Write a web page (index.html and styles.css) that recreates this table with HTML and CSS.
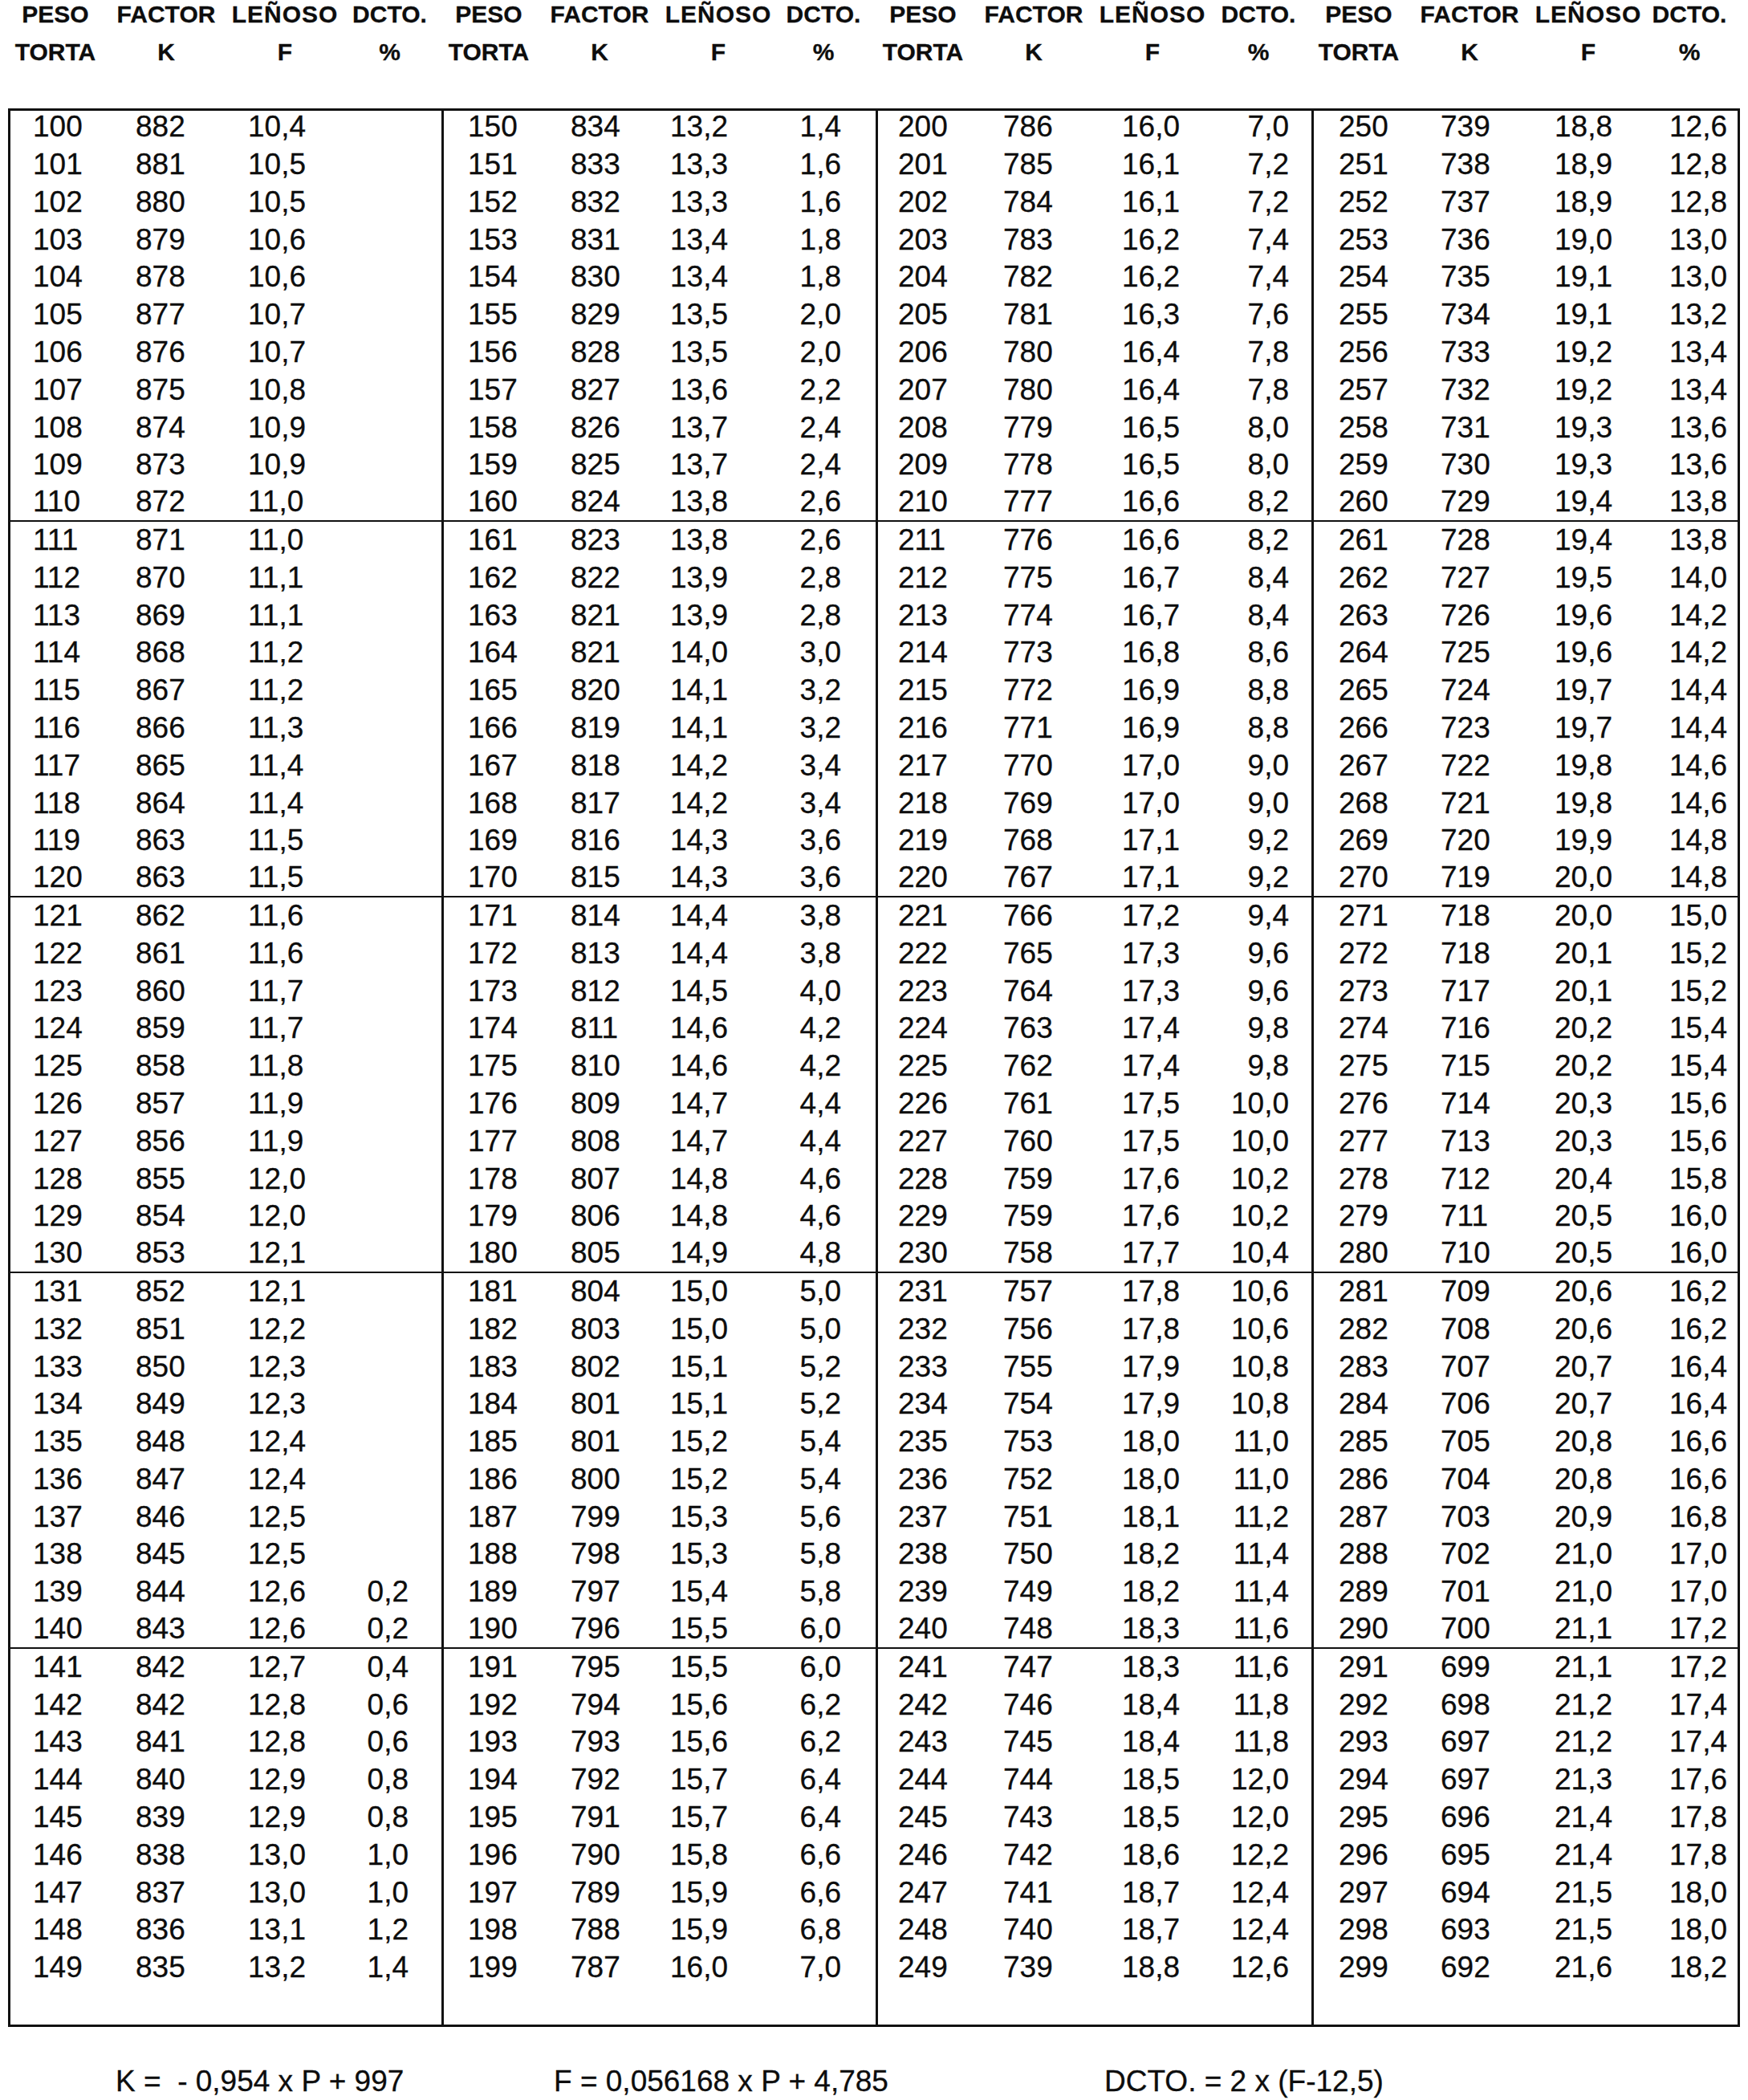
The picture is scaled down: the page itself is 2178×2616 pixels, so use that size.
FILE: index.html
```html
<!DOCTYPE html>
<html lang="es">
<head>
<meta charset="utf-8">
<title>Tabla peso torta</title>
<link rel="stylesheet" href="styles.css">
</head>
<body>
<div class="head">
  <div class="hg g1"><span>PESO</span><span>FACTOR</span><span>LEÑOSO</span><span>DCTO.</span><span>TORTA</span><span>K</span><span>F</span><span>%</span></div>
  <div class="hg g2"><span>PESO</span><span>FACTOR</span><span>LEÑOSO</span><span>DCTO.</span><span>TORTA</span><span>K</span><span>F</span><span>%</span></div>
  <div class="hg g3"><span>PESO</span><span>FACTOR</span><span>LEÑOSO</span><span>DCTO.</span><span>TORTA</span><span>K</span><span>F</span><span>%</span></div>
  <div class="hg g4"><span>PESO</span><span>FACTOR</span><span>LEÑOSO</span><span>DCTO.</span><span>TORTA</span><span>K</span><span>F</span><span>%</span></div>
</div>
<div class="box">
  <div class="grp g1">
    <div class="r"><span>100</span><span>882</span><span>10,4</span><span></span></div>
    <div class="r"><span>101</span><span>881</span><span>10,5</span><span></span></div>
    <div class="r"><span>102</span><span>880</span><span>10,5</span><span></span></div>
    <div class="r"><span>103</span><span>879</span><span>10,6</span><span></span></div>
    <div class="r"><span>104</span><span>878</span><span>10,6</span><span></span></div>
    <div class="r"><span>105</span><span>877</span><span>10,7</span><span></span></div>
    <div class="r"><span>106</span><span>876</span><span>10,7</span><span></span></div>
    <div class="r"><span>107</span><span>875</span><span>10,8</span><span></span></div>
    <div class="r"><span>108</span><span>874</span><span>10,9</span><span></span></div>
    <div class="r"><span>109</span><span>873</span><span>10,9</span><span></span></div>
    <div class="r u"><span>110</span><span>872</span><span>11,0</span><span></span></div>
    <div class="r"><span>111</span><span>871</span><span>11,0</span><span></span></div>
    <div class="r"><span>112</span><span>870</span><span>11,1</span><span></span></div>
    <div class="r"><span>113</span><span>869</span><span>11,1</span><span></span></div>
    <div class="r"><span>114</span><span>868</span><span>11,2</span><span></span></div>
    <div class="r"><span>115</span><span>867</span><span>11,2</span><span></span></div>
    <div class="r"><span>116</span><span>866</span><span>11,3</span><span></span></div>
    <div class="r"><span>117</span><span>865</span><span>11,4</span><span></span></div>
    <div class="r"><span>118</span><span>864</span><span>11,4</span><span></span></div>
    <div class="r"><span>119</span><span>863</span><span>11,5</span><span></span></div>
    <div class="r u"><span>120</span><span>863</span><span>11,5</span><span></span></div>
    <div class="r"><span>121</span><span>862</span><span>11,6</span><span></span></div>
    <div class="r"><span>122</span><span>861</span><span>11,6</span><span></span></div>
    <div class="r"><span>123</span><span>860</span><span>11,7</span><span></span></div>
    <div class="r"><span>124</span><span>859</span><span>11,7</span><span></span></div>
    <div class="r"><span>125</span><span>858</span><span>11,8</span><span></span></div>
    <div class="r"><span>126</span><span>857</span><span>11,9</span><span></span></div>
    <div class="r"><span>127</span><span>856</span><span>11,9</span><span></span></div>
    <div class="r"><span>128</span><span>855</span><span>12,0</span><span></span></div>
    <div class="r"><span>129</span><span>854</span><span>12,0</span><span></span></div>
    <div class="r u"><span>130</span><span>853</span><span>12,1</span><span></span></div>
    <div class="r"><span>131</span><span>852</span><span>12,1</span><span></span></div>
    <div class="r"><span>132</span><span>851</span><span>12,2</span><span></span></div>
    <div class="r"><span>133</span><span>850</span><span>12,3</span><span></span></div>
    <div class="r"><span>134</span><span>849</span><span>12,3</span><span></span></div>
    <div class="r"><span>135</span><span>848</span><span>12,4</span><span></span></div>
    <div class="r"><span>136</span><span>847</span><span>12,4</span><span></span></div>
    <div class="r"><span>137</span><span>846</span><span>12,5</span><span></span></div>
    <div class="r"><span>138</span><span>845</span><span>12,5</span><span></span></div>
    <div class="r"><span>139</span><span>844</span><span>12,6</span><span>0,2</span></div>
    <div class="r u"><span>140</span><span>843</span><span>12,6</span><span>0,2</span></div>
    <div class="r"><span>141</span><span>842</span><span>12,7</span><span>0,4</span></div>
    <div class="r"><span>142</span><span>842</span><span>12,8</span><span>0,6</span></div>
    <div class="r"><span>143</span><span>841</span><span>12,8</span><span>0,6</span></div>
    <div class="r"><span>144</span><span>840</span><span>12,9</span><span>0,8</span></div>
    <div class="r"><span>145</span><span>839</span><span>12,9</span><span>0,8</span></div>
    <div class="r"><span>146</span><span>838</span><span>13,0</span><span>1,0</span></div>
    <div class="r"><span>147</span><span>837</span><span>13,0</span><span>1,0</span></div>
    <div class="r"><span>148</span><span>836</span><span>13,1</span><span>1,2</span></div>
    <div class="r"><span>149</span><span>835</span><span>13,2</span><span>1,4</span></div>
  </div>
  <div class="grp g2">
    <div class="r"><span>150</span><span>834</span><span>13,2</span><span>1,4</span></div>
    <div class="r"><span>151</span><span>833</span><span>13,3</span><span>1,6</span></div>
    <div class="r"><span>152</span><span>832</span><span>13,3</span><span>1,6</span></div>
    <div class="r"><span>153</span><span>831</span><span>13,4</span><span>1,8</span></div>
    <div class="r"><span>154</span><span>830</span><span>13,4</span><span>1,8</span></div>
    <div class="r"><span>155</span><span>829</span><span>13,5</span><span>2,0</span></div>
    <div class="r"><span>156</span><span>828</span><span>13,5</span><span>2,0</span></div>
    <div class="r"><span>157</span><span>827</span><span>13,6</span><span>2,2</span></div>
    <div class="r"><span>158</span><span>826</span><span>13,7</span><span>2,4</span></div>
    <div class="r"><span>159</span><span>825</span><span>13,7</span><span>2,4</span></div>
    <div class="r u"><span>160</span><span>824</span><span>13,8</span><span>2,6</span></div>
    <div class="r"><span>161</span><span>823</span><span>13,8</span><span>2,6</span></div>
    <div class="r"><span>162</span><span>822</span><span>13,9</span><span>2,8</span></div>
    <div class="r"><span>163</span><span>821</span><span>13,9</span><span>2,8</span></div>
    <div class="r"><span>164</span><span>821</span><span>14,0</span><span>3,0</span></div>
    <div class="r"><span>165</span><span>820</span><span>14,1</span><span>3,2</span></div>
    <div class="r"><span>166</span><span>819</span><span>14,1</span><span>3,2</span></div>
    <div class="r"><span>167</span><span>818</span><span>14,2</span><span>3,4</span></div>
    <div class="r"><span>168</span><span>817</span><span>14,2</span><span>3,4</span></div>
    <div class="r"><span>169</span><span>816</span><span>14,3</span><span>3,6</span></div>
    <div class="r u"><span>170</span><span>815</span><span>14,3</span><span>3,6</span></div>
    <div class="r"><span>171</span><span>814</span><span>14,4</span><span>3,8</span></div>
    <div class="r"><span>172</span><span>813</span><span>14,4</span><span>3,8</span></div>
    <div class="r"><span>173</span><span>812</span><span>14,5</span><span>4,0</span></div>
    <div class="r"><span>174</span><span>811</span><span>14,6</span><span>4,2</span></div>
    <div class="r"><span>175</span><span>810</span><span>14,6</span><span>4,2</span></div>
    <div class="r"><span>176</span><span>809</span><span>14,7</span><span>4,4</span></div>
    <div class="r"><span>177</span><span>808</span><span>14,7</span><span>4,4</span></div>
    <div class="r"><span>178</span><span>807</span><span>14,8</span><span>4,6</span></div>
    <div class="r"><span>179</span><span>806</span><span>14,8</span><span>4,6</span></div>
    <div class="r u"><span>180</span><span>805</span><span>14,9</span><span>4,8</span></div>
    <div class="r"><span>181</span><span>804</span><span>15,0</span><span>5,0</span></div>
    <div class="r"><span>182</span><span>803</span><span>15,0</span><span>5,0</span></div>
    <div class="r"><span>183</span><span>802</span><span>15,1</span><span>5,2</span></div>
    <div class="r"><span>184</span><span>801</span><span>15,1</span><span>5,2</span></div>
    <div class="r"><span>185</span><span>801</span><span>15,2</span><span>5,4</span></div>
    <div class="r"><span>186</span><span>800</span><span>15,2</span><span>5,4</span></div>
    <div class="r"><span>187</span><span>799</span><span>15,3</span><span>5,6</span></div>
    <div class="r"><span>188</span><span>798</span><span>15,3</span><span>5,8</span></div>
    <div class="r"><span>189</span><span>797</span><span>15,4</span><span>5,8</span></div>
    <div class="r u"><span>190</span><span>796</span><span>15,5</span><span>6,0</span></div>
    <div class="r"><span>191</span><span>795</span><span>15,5</span><span>6,0</span></div>
    <div class="r"><span>192</span><span>794</span><span>15,6</span><span>6,2</span></div>
    <div class="r"><span>193</span><span>793</span><span>15,6</span><span>6,2</span></div>
    <div class="r"><span>194</span><span>792</span><span>15,7</span><span>6,4</span></div>
    <div class="r"><span>195</span><span>791</span><span>15,7</span><span>6,4</span></div>
    <div class="r"><span>196</span><span>790</span><span>15,8</span><span>6,6</span></div>
    <div class="r"><span>197</span><span>789</span><span>15,9</span><span>6,6</span></div>
    <div class="r"><span>198</span><span>788</span><span>15,9</span><span>6,8</span></div>
    <div class="r"><span>199</span><span>787</span><span>16,0</span><span>7,0</span></div>
  </div>
  <div class="grp g3">
    <div class="r"><span>200</span><span>786</span><span>16,0</span><span>7,0</span></div>
    <div class="r"><span>201</span><span>785</span><span>16,1</span><span>7,2</span></div>
    <div class="r"><span>202</span><span>784</span><span>16,1</span><span>7,2</span></div>
    <div class="r"><span>203</span><span>783</span><span>16,2</span><span>7,4</span></div>
    <div class="r"><span>204</span><span>782</span><span>16,2</span><span>7,4</span></div>
    <div class="r"><span>205</span><span>781</span><span>16,3</span><span>7,6</span></div>
    <div class="r"><span>206</span><span>780</span><span>16,4</span><span>7,8</span></div>
    <div class="r"><span>207</span><span>780</span><span>16,4</span><span>7,8</span></div>
    <div class="r"><span>208</span><span>779</span><span>16,5</span><span>8,0</span></div>
    <div class="r"><span>209</span><span>778</span><span>16,5</span><span>8,0</span></div>
    <div class="r u"><span>210</span><span>777</span><span>16,6</span><span>8,2</span></div>
    <div class="r"><span>211</span><span>776</span><span>16,6</span><span>8,2</span></div>
    <div class="r"><span>212</span><span>775</span><span>16,7</span><span>8,4</span></div>
    <div class="r"><span>213</span><span>774</span><span>16,7</span><span>8,4</span></div>
    <div class="r"><span>214</span><span>773</span><span>16,8</span><span>8,6</span></div>
    <div class="r"><span>215</span><span>772</span><span>16,9</span><span>8,8</span></div>
    <div class="r"><span>216</span><span>771</span><span>16,9</span><span>8,8</span></div>
    <div class="r"><span>217</span><span>770</span><span>17,0</span><span>9,0</span></div>
    <div class="r"><span>218</span><span>769</span><span>17,0</span><span>9,0</span></div>
    <div class="r"><span>219</span><span>768</span><span>17,1</span><span>9,2</span></div>
    <div class="r u"><span>220</span><span>767</span><span>17,1</span><span>9,2</span></div>
    <div class="r"><span>221</span><span>766</span><span>17,2</span><span>9,4</span></div>
    <div class="r"><span>222</span><span>765</span><span>17,3</span><span>9,6</span></div>
    <div class="r"><span>223</span><span>764</span><span>17,3</span><span>9,6</span></div>
    <div class="r"><span>224</span><span>763</span><span>17,4</span><span>9,8</span></div>
    <div class="r"><span>225</span><span>762</span><span>17,4</span><span>9,8</span></div>
    <div class="r"><span>226</span><span>761</span><span>17,5</span><span>10,0</span></div>
    <div class="r"><span>227</span><span>760</span><span>17,5</span><span>10,0</span></div>
    <div class="r"><span>228</span><span>759</span><span>17,6</span><span>10,2</span></div>
    <div class="r"><span>229</span><span>759</span><span>17,6</span><span>10,2</span></div>
    <div class="r u"><span>230</span><span>758</span><span>17,7</span><span>10,4</span></div>
    <div class="r"><span>231</span><span>757</span><span>17,8</span><span>10,6</span></div>
    <div class="r"><span>232</span><span>756</span><span>17,8</span><span>10,6</span></div>
    <div class="r"><span>233</span><span>755</span><span>17,9</span><span>10,8</span></div>
    <div class="r"><span>234</span><span>754</span><span>17,9</span><span>10,8</span></div>
    <div class="r"><span>235</span><span>753</span><span>18,0</span><span>11,0</span></div>
    <div class="r"><span>236</span><span>752</span><span>18,0</span><span>11,0</span></div>
    <div class="r"><span>237</span><span>751</span><span>18,1</span><span>11,2</span></div>
    <div class="r"><span>238</span><span>750</span><span>18,2</span><span>11,4</span></div>
    <div class="r"><span>239</span><span>749</span><span>18,2</span><span>11,4</span></div>
    <div class="r u"><span>240</span><span>748</span><span>18,3</span><span>11,6</span></div>
    <div class="r"><span>241</span><span>747</span><span>18,3</span><span>11,6</span></div>
    <div class="r"><span>242</span><span>746</span><span>18,4</span><span>11,8</span></div>
    <div class="r"><span>243</span><span>745</span><span>18,4</span><span>11,8</span></div>
    <div class="r"><span>244</span><span>744</span><span>18,5</span><span>12,0</span></div>
    <div class="r"><span>245</span><span>743</span><span>18,5</span><span>12,0</span></div>
    <div class="r"><span>246</span><span>742</span><span>18,6</span><span>12,2</span></div>
    <div class="r"><span>247</span><span>741</span><span>18,7</span><span>12,4</span></div>
    <div class="r"><span>248</span><span>740</span><span>18,7</span><span>12,4</span></div>
    <div class="r"><span>249</span><span>739</span><span>18,8</span><span>12,6</span></div>
  </div>
  <div class="grp g4">
    <div class="r"><span>250</span><span>739</span><span>18,8</span><span>12,6</span></div>
    <div class="r"><span>251</span><span>738</span><span>18,9</span><span>12,8</span></div>
    <div class="r"><span>252</span><span>737</span><span>18,9</span><span>12,8</span></div>
    <div class="r"><span>253</span><span>736</span><span>19,0</span><span>13,0</span></div>
    <div class="r"><span>254</span><span>735</span><span>19,1</span><span>13,0</span></div>
    <div class="r"><span>255</span><span>734</span><span>19,1</span><span>13,2</span></div>
    <div class="r"><span>256</span><span>733</span><span>19,2</span><span>13,4</span></div>
    <div class="r"><span>257</span><span>732</span><span>19,2</span><span>13,4</span></div>
    <div class="r"><span>258</span><span>731</span><span>19,3</span><span>13,6</span></div>
    <div class="r"><span>259</span><span>730</span><span>19,3</span><span>13,6</span></div>
    <div class="r u"><span>260</span><span>729</span><span>19,4</span><span>13,8</span></div>
    <div class="r"><span>261</span><span>728</span><span>19,4</span><span>13,8</span></div>
    <div class="r"><span>262</span><span>727</span><span>19,5</span><span>14,0</span></div>
    <div class="r"><span>263</span><span>726</span><span>19,6</span><span>14,2</span></div>
    <div class="r"><span>264</span><span>725</span><span>19,6</span><span>14,2</span></div>
    <div class="r"><span>265</span><span>724</span><span>19,7</span><span>14,4</span></div>
    <div class="r"><span>266</span><span>723</span><span>19,7</span><span>14,4</span></div>
    <div class="r"><span>267</span><span>722</span><span>19,8</span><span>14,6</span></div>
    <div class="r"><span>268</span><span>721</span><span>19,8</span><span>14,6</span></div>
    <div class="r"><span>269</span><span>720</span><span>19,9</span><span>14,8</span></div>
    <div class="r u"><span>270</span><span>719</span><span>20,0</span><span>14,8</span></div>
    <div class="r"><span>271</span><span>718</span><span>20,0</span><span>15,0</span></div>
    <div class="r"><span>272</span><span>718</span><span>20,1</span><span>15,2</span></div>
    <div class="r"><span>273</span><span>717</span><span>20,1</span><span>15,2</span></div>
    <div class="r"><span>274</span><span>716</span><span>20,2</span><span>15,4</span></div>
    <div class="r"><span>275</span><span>715</span><span>20,2</span><span>15,4</span></div>
    <div class="r"><span>276</span><span>714</span><span>20,3</span><span>15,6</span></div>
    <div class="r"><span>277</span><span>713</span><span>20,3</span><span>15,6</span></div>
    <div class="r"><span>278</span><span>712</span><span>20,4</span><span>15,8</span></div>
    <div class="r"><span>279</span><span>711</span><span>20,5</span><span>16,0</span></div>
    <div class="r u"><span>280</span><span>710</span><span>20,5</span><span>16,0</span></div>
    <div class="r"><span>281</span><span>709</span><span>20,6</span><span>16,2</span></div>
    <div class="r"><span>282</span><span>708</span><span>20,6</span><span>16,2</span></div>
    <div class="r"><span>283</span><span>707</span><span>20,7</span><span>16,4</span></div>
    <div class="r"><span>284</span><span>706</span><span>20,7</span><span>16,4</span></div>
    <div class="r"><span>285</span><span>705</span><span>20,8</span><span>16,6</span></div>
    <div class="r"><span>286</span><span>704</span><span>20,8</span><span>16,6</span></div>
    <div class="r"><span>287</span><span>703</span><span>20,9</span><span>16,8</span></div>
    <div class="r"><span>288</span><span>702</span><span>21,0</span><span>17,0</span></div>
    <div class="r"><span>289</span><span>701</span><span>21,0</span><span>17,0</span></div>
    <div class="r u"><span>290</span><span>700</span><span>21,1</span><span>17,2</span></div>
    <div class="r"><span>291</span><span>699</span><span>21,1</span><span>17,2</span></div>
    <div class="r"><span>292</span><span>698</span><span>21,2</span><span>17,4</span></div>
    <div class="r"><span>293</span><span>697</span><span>21,2</span><span>17,4</span></div>
    <div class="r"><span>294</span><span>697</span><span>21,3</span><span>17,6</span></div>
    <div class="r"><span>295</span><span>696</span><span>21,4</span><span>17,8</span></div>
    <div class="r"><span>296</span><span>695</span><span>21,4</span><span>17,8</span></div>
    <div class="r"><span>297</span><span>694</span><span>21,5</span><span>18,0</span></div>
    <div class="r"><span>298</span><span>693</span><span>21,5</span><span>18,0</span></div>
    <div class="r"><span>299</span><span>692</span><span>21,6</span><span>18,2</span></div>
  </div>
</div>
<div class="formulas">
  <span>K =  - 0,954 x P + 997</span>
  <span>F = 0,056168 x P + 4,785</span>
  <span>DCTO. = 2 x (F-12,5)</span>
</div>
</body>
</html>
```

FILE: styles.css
```css
html, body {
  margin: 0;
  padding: 0;
  background: #ffffff;
}

body {
  width: 2178px;
  color: #0d0d0d;
  font-family: "Liberation Sans", Arial, sans-serif;
  font-size: 37px;
  -webkit-text-stroke: 0.3px #0d0d0d;
}

/* column groups: shared widths and text offsets */
.g1 { width: 537px; --p: 28px; --k: 156px; --f: 296px; --d: 41px; }
.g2 { width: 538px; --p: 30px; --k: 158px; --f: 282px; --d: 43px; }
.g3 { width: 540px; --p: 25px; --k: 156px; --f: 304px; --d: 28px; }
.g4 { width: 528px; --p: 31px; --k: 158px; --f: 300px; --d: 13px; }

/* header */
.head {
  display: flex;
  margin: -5.2px 0 0 4px;
  border-left: 3px solid transparent;
}

.hg {
  display: grid;
  grid-template-columns: 124px 152px 144px 1fr;
  grid-auto-rows: 46.8px;
  font-weight: bold;
  font-size: 30px;
  line-height: 46.8px;
  text-align: center;
  white-space: nowrap;
}

.hg span:nth-child(3) {
  letter-spacing: 1px;
}

.head .g2,
.head .g3,
.head .g4 {
  border-left: 3px solid transparent;
}

/* data box */
.box {
  display: flex;
  width: max-content;
  margin: 46.8px 0 0 10px;
  border: 3px solid #111111;
}

.grp {
  margin-top: -3px;
  padding-bottom: 46.8px;
}

.box .g2,
.box .g3,
.box .g4 {
  border-left: 3px solid #111111;
}

.r {
  display: grid;
  grid-template-columns: var(--k) calc(var(--f) - var(--k)) 90px 1fr;
  height: 46.8px;
  line-height: 46.8px;
  box-sizing: border-box;
  white-space: nowrap;
}

.r span:first-child {
  padding-left: var(--p);
}

.r span:last-child {
  text-align: right;
  padding-right: var(--d);
}

.r.u {
  border-bottom: 2px solid #111111;
  line-height: 44.8px;
}

/* formulas */
.formulas {
  display: grid;
  grid-template-columns: 546px 686px auto;
  margin-top: 45.6px;
  padding-left: 144px;
  height: 46.8px;
  line-height: 46.8px;
  white-space: pre;
}
```
